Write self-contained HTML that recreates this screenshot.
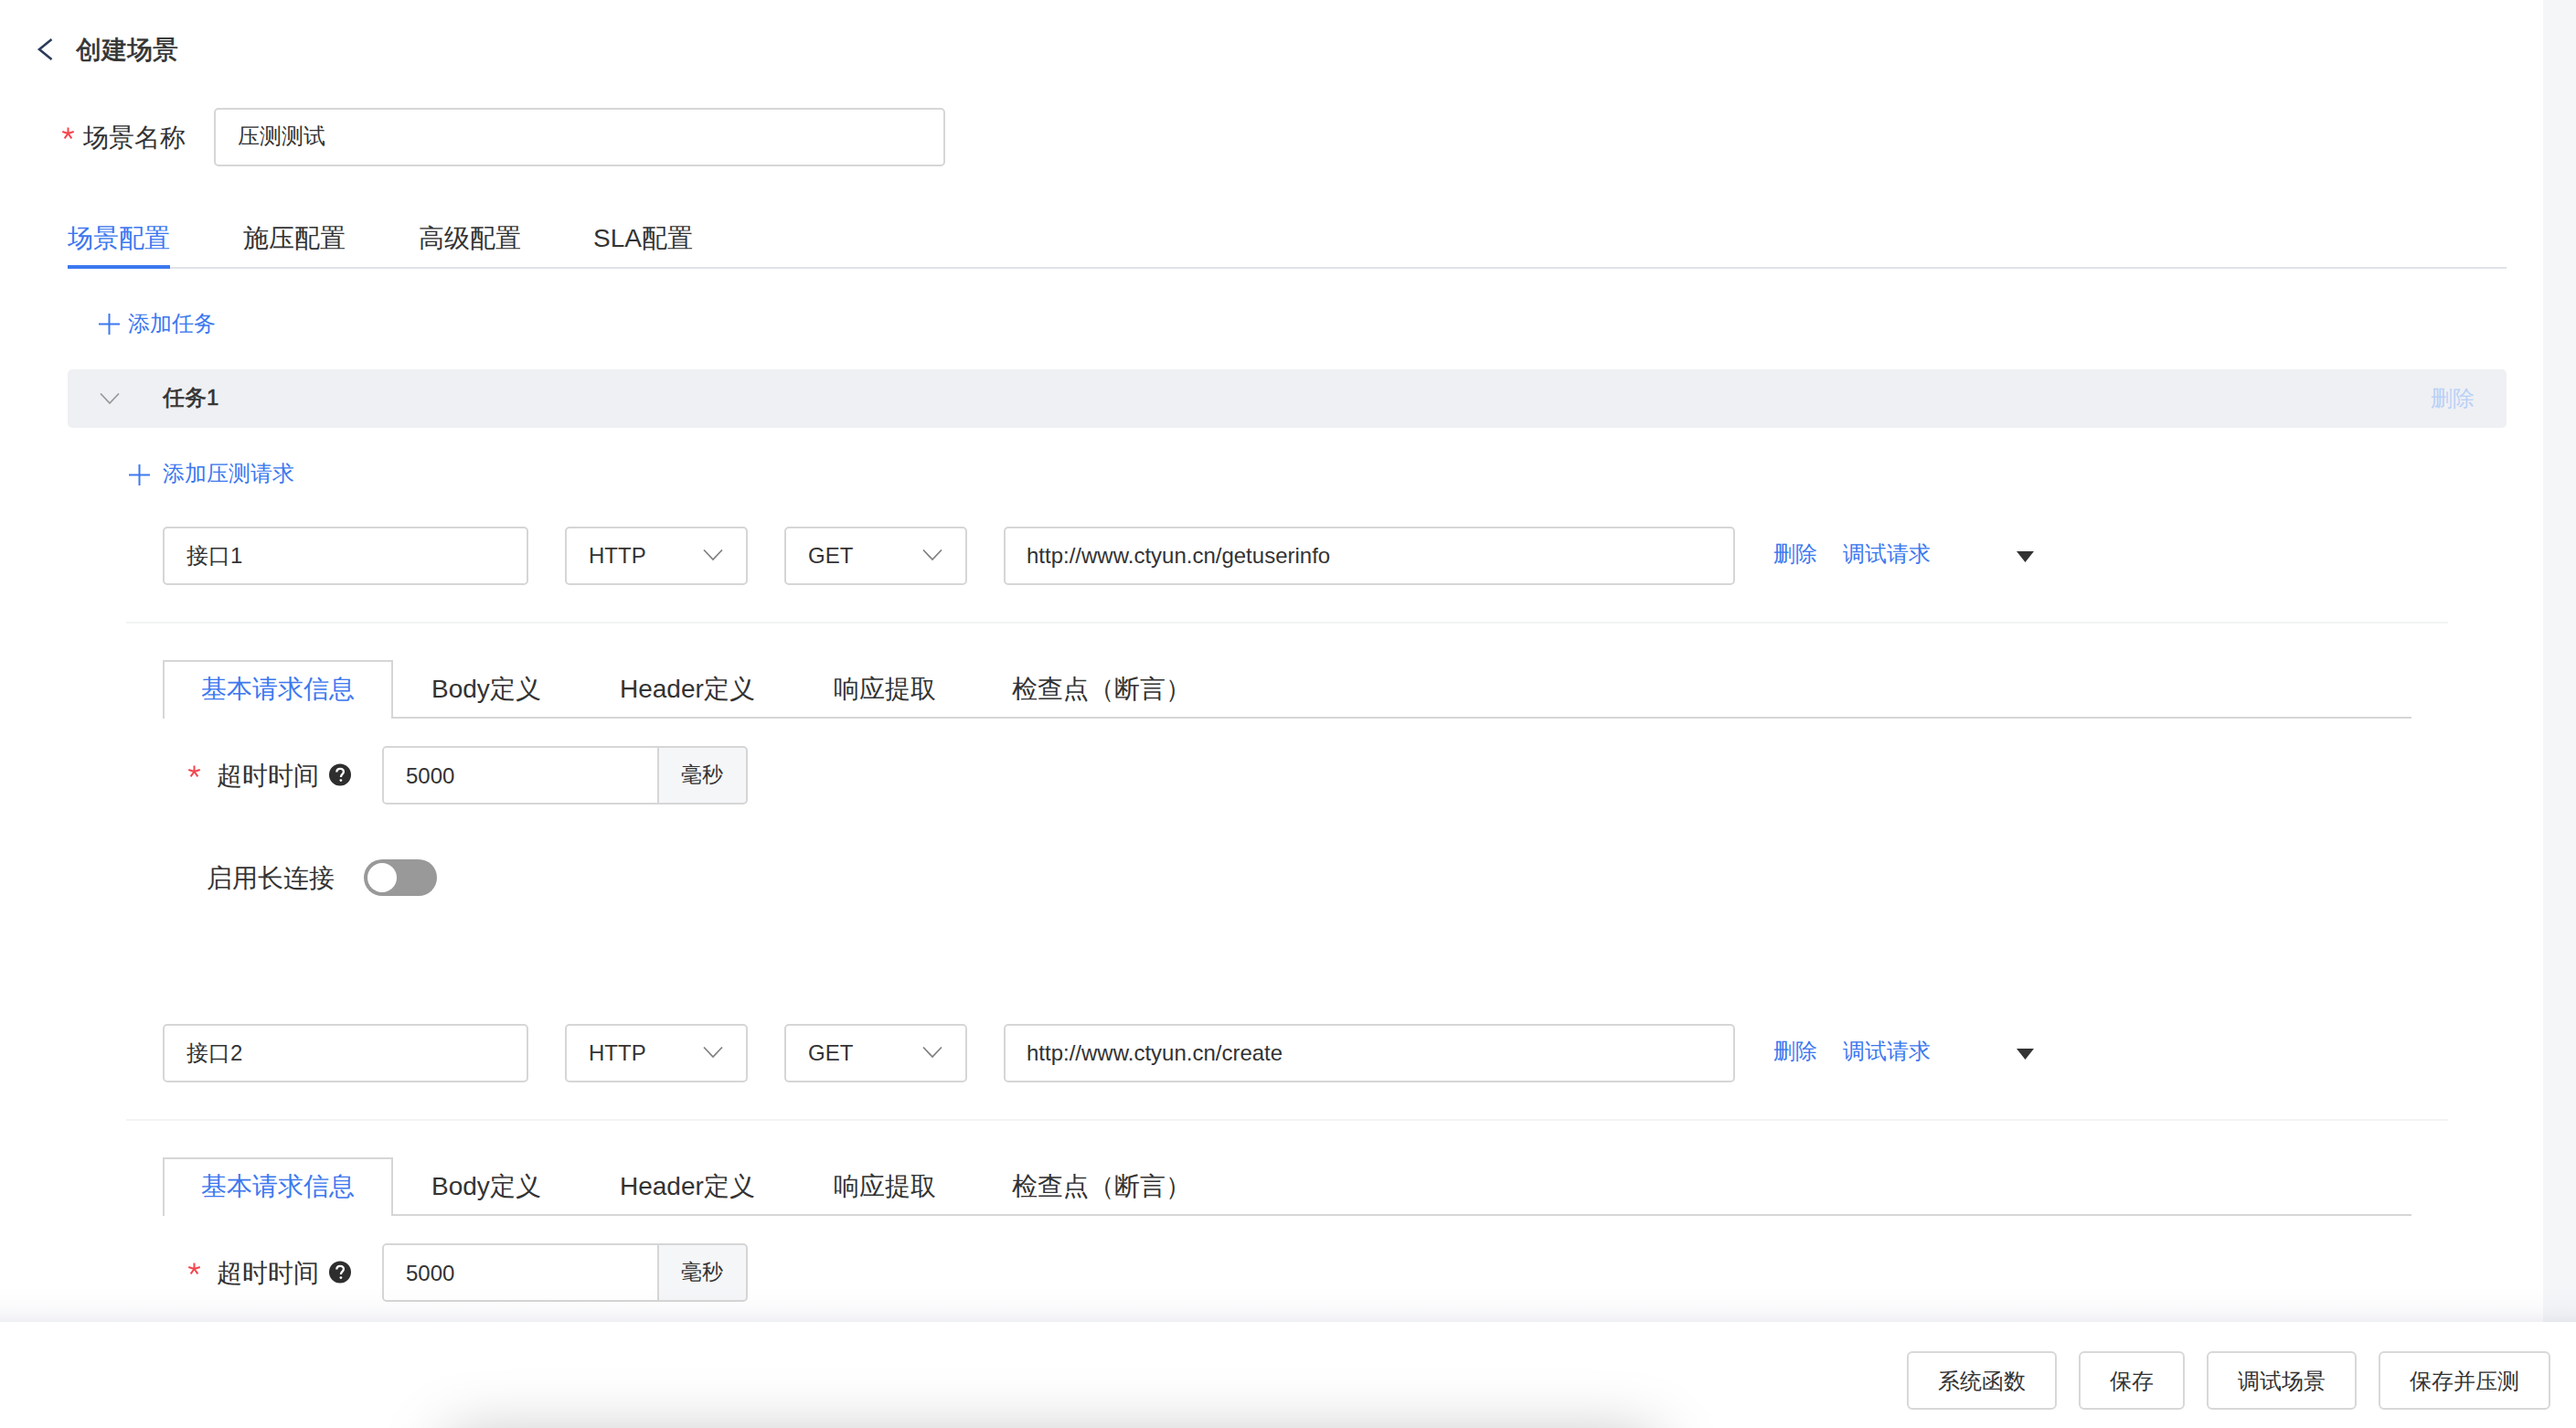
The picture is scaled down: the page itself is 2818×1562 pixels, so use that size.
<!DOCTYPE html>
<html><head><meta charset="utf-8">
<style>
*{margin:0;padding:0;box-sizing:border-box}
html,body{width:2818px;height:1562px;overflow:hidden;background:#fff}
body{font-family:"Liberation Sans",sans-serif;color:#333;position:relative}
.a{position:absolute;white-space:nowrap}
.strip{position:absolute;left:2782px;top:0;width:36px;height:1446px;background:#f5f6f8}
.fade{position:absolute;left:0;top:1406px;width:2818px;height:40px;background:linear-gradient(to bottom,rgba(0,20,80,0) 0%,rgba(0,20,80,0.006) 30%,rgba(0,20,80,0.016) 55%,rgba(0,20,80,0.032) 75%,rgba(0,20,80,0.05) 90%,rgba(0,20,80,0.066) 100%)}
.blob{position:absolute;left:490px;top:126px;width:1320px;height:200px;box-shadow:0 0 70px rgba(0,0,0,0.25)}
.footer{position:absolute;left:0;top:1446px;width:2818px;height:116px;background:#fff;overflow:hidden}
.inp{position:absolute;border:2px solid #d6d6d6;border-radius:5px;background:#fff}
.blue{color:#3c78ef}
.t28{font-size:28px;line-height:28px}
.t26{font-size:26px;line-height:26px}
.t24{font-size:24px;line-height:24px}
.t23{font-size:23px;line-height:23px}
.divider{position:absolute;height:2px;background:#f2f3f5}
.btn{position:absolute;top:32px;height:64px;border:2px solid #d8d8d8;border-radius:6px;background:#fff;font-size:24px;line-height:61px;text-align:center;color:#333}
</style></head><body>
<div class="strip"></div>

<svg class="a" style="left:40px;top:41px" width="20" height="26" viewBox="0 0 20 26"><path d="M16.5 2 L3 13 L16.5 24" fill="none" stroke="#2b3b5c" stroke-width="2.6"/></svg>
<div class="a t28" style="left:83px;top:41px;-webkit-text-stroke:0.6px #333">创建场景</div>

<svg class="a" style="left:68px;top:139px" width="13" height="14" viewBox="0 0 13 14"><path d="M6.50 7.00L6.50 0.40M6.50 7.00L12.78 4.96M6.50 7.00L10.38 12.34M6.50 7.00L2.62 12.34M6.50 7.00L0.22 4.96" stroke="#f5444c" stroke-width="2" stroke-linecap="butt"/></svg>
<div class="a t28" style="left:91px;top:137px">场景名称</div>
<div class="inp" style="left:234px;top:118px;width:800px;height:64px"></div>
<div class="a t24" style="left:260px;top:137px">压测测试</div>

<div class="a t28 blue" style="left:74px;top:247px">场景配置</div>
<div class="a t28" style="left:266px;top:247px">施压配置</div>
<div class="a t28" style="left:458px;top:247px">高级配置</div>
<div class="a t28" style="left:649px;top:247px">SLA配置</div>
<div class="a" style="left:74px;top:292px;width:2668px;height:2px;background:#dfe2e9"></div>
<div class="a" style="left:74px;top:290px;width:112px;height:4px;background:#3c78ef"></div>

<svg class="a" style="left:108px;top:343px" width="23" height="23" viewBox="0 0 23 23"><path d="M11.5 0V23M0 11.5H23" stroke="#3c78ef" stroke-width="2"/></svg>
<div class="a t24 blue" style="left:140px;top:342px">添加任务</div>

<div class="a" style="left:74px;top:404px;width:2668px;height:64px;background:#eff0f3;border-radius:5px"></div>
<svg class="a" style="left:109px;top:429px" width="22" height="14" viewBox="0 0 22 14"><path d="M1 1.5 L11 12 L21 1.5" fill="none" stroke="#999" stroke-width="1.8"/></svg>
<div class="a t24" style="left:178px;top:423px;-webkit-text-stroke:0.6px #333">任务1</div>
<div class="a t24" style="left:2659px;top:424px;color:#b9d0f8">删除</div>

<svg class="a" style="left:141px;top:508px" width="23" height="23" viewBox="0 0 23 23"><path d="M11.5 0V23M0 11.5H23" stroke="#3c78ef" stroke-width="2"/></svg>
<div class="a t24 blue" style="left:178px;top:506px">添加压测请求</div>

<div class="inp" style="left:178px;top:576px;width:400px;height:64px"></div>
<div class="a t24" style="left:204px;top:596px">接口1</div>
<div class="inp" style="left:618px;top:576px;width:200px;height:64px"></div>
<div class="a t24" style="left:644px;top:596px">HTTP</div>
<svg class="a" style="left:769px;top:600px" width="22" height="14" viewBox="0 0 22 14"><path d="M1 1.5 L11 12 L21 1.5" fill="none" stroke="#7f7f7f" stroke-width="1.7"/></svg>
<div class="inp" style="left:858px;top:576px;width:200px;height:64px"></div>
<div class="a t24" style="left:884px;top:596px">GET</div>
<svg class="a" style="left:1009px;top:600px" width="22" height="14" viewBox="0 0 22 14"><path d="M1 1.5 L11 12 L21 1.5" fill="none" stroke="#7f7f7f" stroke-width="1.7"/></svg>
<div class="inp" style="left:1098px;top:576px;width:800px;height:64px"></div>
<div class="a t24" style="left:1123px;top:596px">http://www.ctyun.cn/getuserinfo</div>
<div class="a t24 blue" style="left:1940px;top:594px">删除</div>
<div class="a t24 blue" style="left:2016px;top:594px">调试请求</div>
<svg class="a" style="left:2206px;top:603px" width="19" height="12" viewBox="0 0 19 12"><path d="M0 0H19L9.5 12Z" fill="#333"/></svg>
<div class="divider" style="left:138px;top:680px;width:2540px"></div>
<div class="a" style="left:178px;top:722px;width:252px;height:64px;border:2px solid #d6d6d6;border-bottom:none;background:#fff"></div>
<div class="a" style="left:430px;top:784px;width:2208px;height:2px;background:#d6d6d6"></div>
<div class="a t28 blue" style="left:220px;top:740px">基本请求信息</div>
<div class="a t28" style="left:472px;top:740px">Body定义</div>
<div class="a t28" style="left:678px;top:740px">Header定义</div>
<div class="a t28" style="left:912px;top:740px">响应提取</div>
<div class="a t28" style="left:1107px;top:740px">检查点（断言）</div>
<svg class="a" style="left:206px;top:837px" width="13" height="14" viewBox="0 0 13 14"><path d="M6.50 7.00L6.50 0.40M6.50 7.00L12.78 4.96M6.50 7.00L10.38 12.34M6.50 7.00L2.62 12.34M6.50 7.00L0.22 4.96" stroke="#f5444c" stroke-width="2" stroke-linecap="butt"/></svg>
<div class="a t28" style="left:237px;top:835px">超时时间</div>
<svg class="a" style="left:360px;top:835px" width="24" height="25" viewBox="0 0 24 25"><circle cx="12" cy="12.5" r="12" fill="#2e2e2e"/><path d="M8.3 9.6 C8.3 7.3 10 5.9 12.1 5.9 C14.3 5.9 15.9 7.3 15.9 9.3 C15.9 11.6 13 12 13 14.4 V15" fill="none" stroke="#fff" stroke-width="2.3"/><circle cx="12.9" cy="18.6" r="1.4" fill="#fff"/></svg>
<div class="inp" style="left:418px;top:816px;width:400px;height:64px;background:#f5f6f8"></div>
<div class="a" style="left:420px;top:818px;width:301px;height:60px;background:#fff;border-right:2px solid #d6d6d6;border-radius:3px 0 0 3px"></div>
<div class="a t24" style="left:444px;top:837px">5000</div>
<div class="a t23" style="left:745px;top:836px">毫秒</div>
<div class="a t28" style="left:226px;top:947px">启用长连接</div>
<div class="a" style="left:398px;top:940px;width:80px;height:40px;border-radius:20px;background:#999"></div>
<div class="a" style="left:402px;top:944px;width:32px;height:32px;border-radius:16px;background:#fff"></div>
<div class="inp" style="left:178px;top:1120px;width:400px;height:64px"></div>
<div class="a t24" style="left:204px;top:1140px">接口2</div>
<div class="inp" style="left:618px;top:1120px;width:200px;height:64px"></div>
<div class="a t24" style="left:644px;top:1140px">HTTP</div>
<svg class="a" style="left:769px;top:1144px" width="22" height="14" viewBox="0 0 22 14"><path d="M1 1.5 L11 12 L21 1.5" fill="none" stroke="#7f7f7f" stroke-width="1.7"/></svg>
<div class="inp" style="left:858px;top:1120px;width:200px;height:64px"></div>
<div class="a t24" style="left:884px;top:1140px">GET</div>
<svg class="a" style="left:1009px;top:1144px" width="22" height="14" viewBox="0 0 22 14"><path d="M1 1.5 L11 12 L21 1.5" fill="none" stroke="#7f7f7f" stroke-width="1.7"/></svg>
<div class="inp" style="left:1098px;top:1120px;width:800px;height:64px"></div>
<div class="a t24" style="left:1123px;top:1140px">http://www.ctyun.cn/create</div>
<div class="a t24 blue" style="left:1940px;top:1138px">删除</div>
<div class="a t24 blue" style="left:2016px;top:1138px">调试请求</div>
<svg class="a" style="left:2206px;top:1147px" width="19" height="12" viewBox="0 0 19 12"><path d="M0 0H19L9.5 12Z" fill="#333"/></svg>
<div class="divider" style="left:138px;top:1224px;width:2540px"></div>
<div class="a" style="left:178px;top:1266px;width:252px;height:64px;border:2px solid #d6d6d6;border-bottom:none;background:#fff"></div>
<div class="a" style="left:430px;top:1328px;width:2208px;height:2px;background:#d6d6d6"></div>
<div class="a t28 blue" style="left:220px;top:1284px">基本请求信息</div>
<div class="a t28" style="left:472px;top:1284px">Body定义</div>
<div class="a t28" style="left:678px;top:1284px">Header定义</div>
<div class="a t28" style="left:912px;top:1284px">响应提取</div>
<div class="a t28" style="left:1107px;top:1284px">检查点（断言）</div>
<svg class="a" style="left:206px;top:1381px" width="13" height="14" viewBox="0 0 13 14"><path d="M6.50 7.00L6.50 0.40M6.50 7.00L12.78 4.96M6.50 7.00L10.38 12.34M6.50 7.00L2.62 12.34M6.50 7.00L0.22 4.96" stroke="#f5444c" stroke-width="2" stroke-linecap="butt"/></svg>
<div class="a t28" style="left:237px;top:1379px">超时时间</div>
<svg class="a" style="left:360px;top:1379px" width="24" height="25" viewBox="0 0 24 25"><circle cx="12" cy="12.5" r="12" fill="#2e2e2e"/><path d="M8.3 9.6 C8.3 7.3 10 5.9 12.1 5.9 C14.3 5.9 15.9 7.3 15.9 9.3 C15.9 11.6 13 12 13 14.4 V15" fill="none" stroke="#fff" stroke-width="2.3"/><circle cx="12.9" cy="18.6" r="1.4" fill="#fff"/></svg>
<div class="inp" style="left:418px;top:1360px;width:400px;height:64px;background:#f5f6f8"></div>
<div class="a" style="left:420px;top:1362px;width:301px;height:60px;background:#fff;border-right:2px solid #d6d6d6;border-radius:3px 0 0 3px"></div>
<div class="a t24" style="left:444px;top:1381px">5000</div>
<div class="a t23" style="left:745px;top:1380px">毫秒</div>

<div class="fade"></div>
<div class="footer">
<div class="blob"></div>
<div class="btn" style="left:2086px;width:164px">系统函数</div>
<div class="btn" style="left:2274px;width:116px">保存</div>
<div class="btn" style="left:2414px;width:164px">调试场景</div>
<div class="btn" style="left:2602px;width:188px">保存并压测</div>
</div>
</body></html>
